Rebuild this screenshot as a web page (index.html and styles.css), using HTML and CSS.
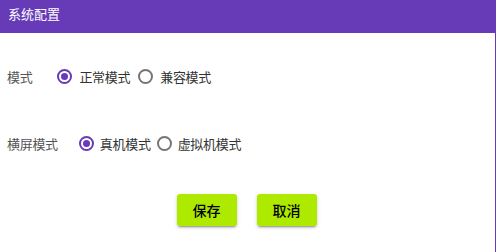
FILE: index.html
```html
<!DOCTYPE html>
<html lang="zh">
  <head>
    <meta charset="UTF-8" />
    <title>系统配置</title>
    <link rel="stylesheet" href="styles.css">
  </head>
  <body>
    <div class="dialog">
      <div class="dialog_title">系统配置</div>
      <form class="config_form">
        <div class="form_row row_mode">
          <span class="form_label">模式</span>
          <label class="radio"><input type="radio" name="mode" checked /><span class="radio_mark"></span>正常模式</label>
          <label class="radio"><input type="radio" name="mode" /><span class="radio_mark"></span>兼容模式</label>
        </div>
        <div class="form_row row_screen">
          <span class="form_label">横屏模式</span>
          <label class="radio"><input type="radio" name="screen" checked /><span class="radio_mark"></span>真机模式</label>
          <label class="radio"><input type="radio" name="screen" /><span class="radio_mark"></span>虚拟机模式</label>
        </div>
        <div class="actions">
          <button type="button" class="btn">保存</button>
          <button type="button" class="btn">取消</button>
        </div>
      </form>
    </div>
  </body>
</html>
```

FILE: styles.css
```css
html, body {
  margin: 0;
  padding: 0;
  background: #ffffff;
}
body {
  font-family: Roboto, "Noto Sans CJK SC", sans-serif;
  font-size: 13px;
  color: #333333;
}
.dialog {
  width: 495px;
  height: 252px;
  border-right: 1px solid #673ab7;
  box-sizing: content-box;
}
.dialog_title {
  height: 33px;
  box-sizing: border-box;
  padding: 6px 8px 0;
  line-height: 17px;
  background: #673ab7;
  color: #ffffff;
  font-size: 13px;
}
.config_form {
  padding: 33px 0 0 7px;
}
.form_row {
  display: flex;
  align-items: center;
  height: 20px;
  letter-spacing: -0.3px;
}
.row_screen {
  margin-top: 47px;
}
.form_label {
  color: #555555;
  margin-right: 25px;
}
.row_screen .form_label {
  margin-right: 21px;
}
.radio {
  display: flex;
  align-items: center;
  margin-right: 6px;
  color: #333333;
}
.row_mode .radio {
  margin-right: 8px;
}
.radio input {
  display: none;
}
.radio_mark {
  width: 15px;
  height: 15px;
  box-sizing: border-box;
  border: 2px solid #757575;
  border-radius: 50%;
  margin-right: 6px;
  display: flex;
  align-items: center;
  justify-content: center;
}
.row_mode .radio_mark {
  margin-right: 7px;
}
.radio input:checked + .radio_mark {
  border-color: #673ab7;
}
.radio input:checked + .radio_mark::after {
  content: "";
  width: 7px;
  height: 7px;
  border-radius: 50%;
  background: #673ab7;
}
.actions {
  display: flex;
  justify-content: center;
  gap: 20px;
  margin-top: 41px;
  padding-right: 9px;
}
.btn {
  width: 60px;
  height: 32px;
  border: none;
  border-radius: 3px;
  background: #aeea00;
  color: #000000;
  font-family: Roboto, "Noto Sans CJK SC", sans-serif;
  font-size: 14px;
  font-weight: 500;
  box-shadow: 0 3px 1px -2px rgba(0, 0, 0, 0.2), 0 2px 2px 0 rgba(0, 0, 0, 0.14), 0 1px 5px 0 rgba(0, 0, 0, 0.12);
}
```
